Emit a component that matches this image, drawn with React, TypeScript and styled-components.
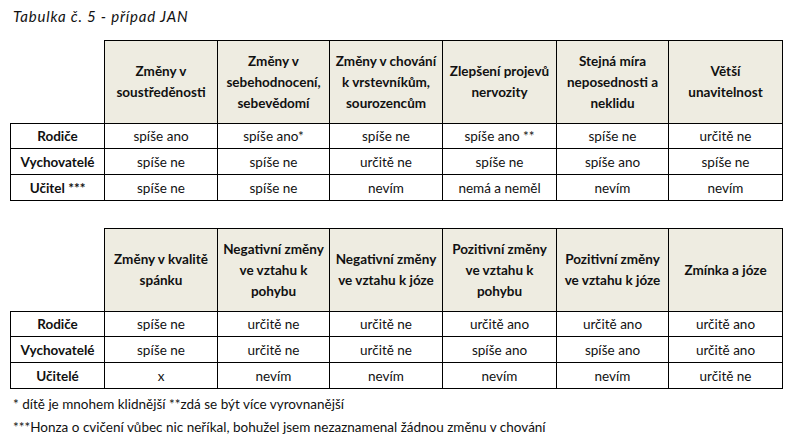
import React from 'react'
import styled, { createGlobalStyle } from 'styled-components'

const GlobalStyle = createGlobalStyle`
  html, body {
    margin: 0;
    padding: 0;
    background: #ffffff;
  }
  body {
    font-family: Lato, 'Open Sans', 'DejaVu Sans', sans-serif;
    color: #111111;
  }
`

const Page = styled.div`
  width: 788px;
  height: 439px;
  padding: 7px 0 0 10px;
  box-sizing: border-box;
  display: flex;
  flex-direction: column;
`

const Title = styled.div`
  font-style: italic;
  font-size: 15px;
  letter-spacing: 0.8px;
  line-height: 18px;
  padding-left: 3px;
  height: 39px;
`

const Table = styled.table<{ $gap: number }>`
  border-collapse: collapse;
  table-layout: fixed;
  width: 772px;
  margin-bottom: ${(p) => p.$gap}px;
  font-size: 13.5px;
`

const Corner = styled.td`
  border: none;
  padding: 0;
`

const HeadCell = styled.th`
  height: 82px;
  background: #eeece1;
  border: 1px solid #000;
  font-weight: 700;
  font-size: 13.5px;
  line-height: 21px;
  text-align: center;
  vertical-align: middle;
  padding: 0 2px;
`

const RowLabel = styled.th`
  border: 1px solid #000;
  font-weight: 700;
  text-align: center;
  vertical-align: middle;
  padding: 0;
`

const Cell = styled.td`
  border: 1px solid #000;
  text-align: center;
  vertical-align: middle;
  padding: 0;
  white-space: nowrap;
`

const Row = styled.tr<{ $h: number }>`
  height: ${(p) => p.$h}px;
`

const Note = styled.div`
  font-size: 13.5px;
  line-height: 23px;
  padding-left: 3px;
`

type TableData = {
  heads: React.ReactNode[]
  rows: { label: string; cells: string[] }[]
}

const table1: TableData = {
  heads: [
    <>Změny v<br />soustředěnosti</>,
    <>Změny v<br />sebehodnocení,<br />sebevědomí</>,
    <>Změny v chování<br />k vrstevníkům,<br />sourozencům</>,
    <>Zlepšení projevů<br />nervozity</>,
    <>Stejná míra<br />neposednosti a<br />neklidu</>,
    <>Větší<br />unavitelnost</>,
  ],
  rows: [
    { label: 'Rodiče', cells: ['spíše ano', 'spíše ano*', 'spíše ne', 'spíše ano **', 'spíše ne', 'určitě ne'] },
    { label: 'Vychovatelé', cells: ['spíše ne', 'spíše ne', 'určitě ne', 'spíše ne', 'spíše ano', 'spíše ne'] },
    { label: 'Učitel ***', cells: ['spíše ne', 'spíše ne', 'nevím', 'nemá a neměl', 'nevím', 'nevím'] },
  ],
}

const table2: TableData = {
  heads: [
    <>Změny v kvalitě<br />spánku</>,
    <>Negativní změny<br />ve vztahu k<br />pohybu</>,
    <>Negativní změny<br />ve vztahu k józe</>,
    <>Pozitivní změny<br />ve vztahu k<br />pohybu</>,
    <>Pozitivní změny<br />ve vztahu k józe</>,
    <>Zmínka a józe</>,
  ],
  rows: [
    { label: 'Rodiče', cells: ['spíše ne', 'určitě ne', 'určitě ne', 'určitě ano', 'určitě ano', 'určitě ano'] },
    { label: 'Vychovatelé', cells: ['spíše ne', 'určitě ne', 'určitě ne', 'spíše ano', 'spíše ano', 'určitě ano'] },
    { label: 'Učitelé', cells: ['x', 'nevím', 'nevím', 'nevím', 'nevím', 'určitě ne'] },
  ],
}

const colWidths = [94, 113, 112, 113, 114, 112, 114]
const rowHeights = [25, 26, 26]

function DataTable({ data, gap }: { data: TableData; gap: number }) {
  return (
    <Table $gap={gap}>
      <colgroup>
        {colWidths.map((w, i) => (
          <col key={i} style={{ width: w }} />
        ))}
      </colgroup>
      <thead>
        <tr>
          <Corner />
          {data.heads.map((h, i) => (
            <HeadCell key={i}>{h}</HeadCell>
          ))}
        </tr>
      </thead>
      <tbody>
        {data.rows.map((r, i) => (
          <Row key={r.label} $h={rowHeights[i]}>
            <RowLabel>{r.label}</RowLabel>
            {r.cells.map((c, j) => (
              <Cell key={j}>{c}</Cell>
            ))}
          </Row>
        ))}
      </tbody>
    </Table>
  )
}

export default function App() {
  return (
    <>
      <GlobalStyle />
      <Page>
        <Title>Tabulka č. 5 - případ JAN</Title>
        <DataTable data={table1} gap={27} />
        <DataTable data={table2} gap={4} />
        <Note>* dítě je mnohem klidnější **zdá se být více vyrovnanější</Note>
        <Note>***Honza o cvičení vůbec nic neříkal, bohužel jsem nezaznamenal žádnou změnu v chování</Note>
      </Page>
    </>
  )
}
